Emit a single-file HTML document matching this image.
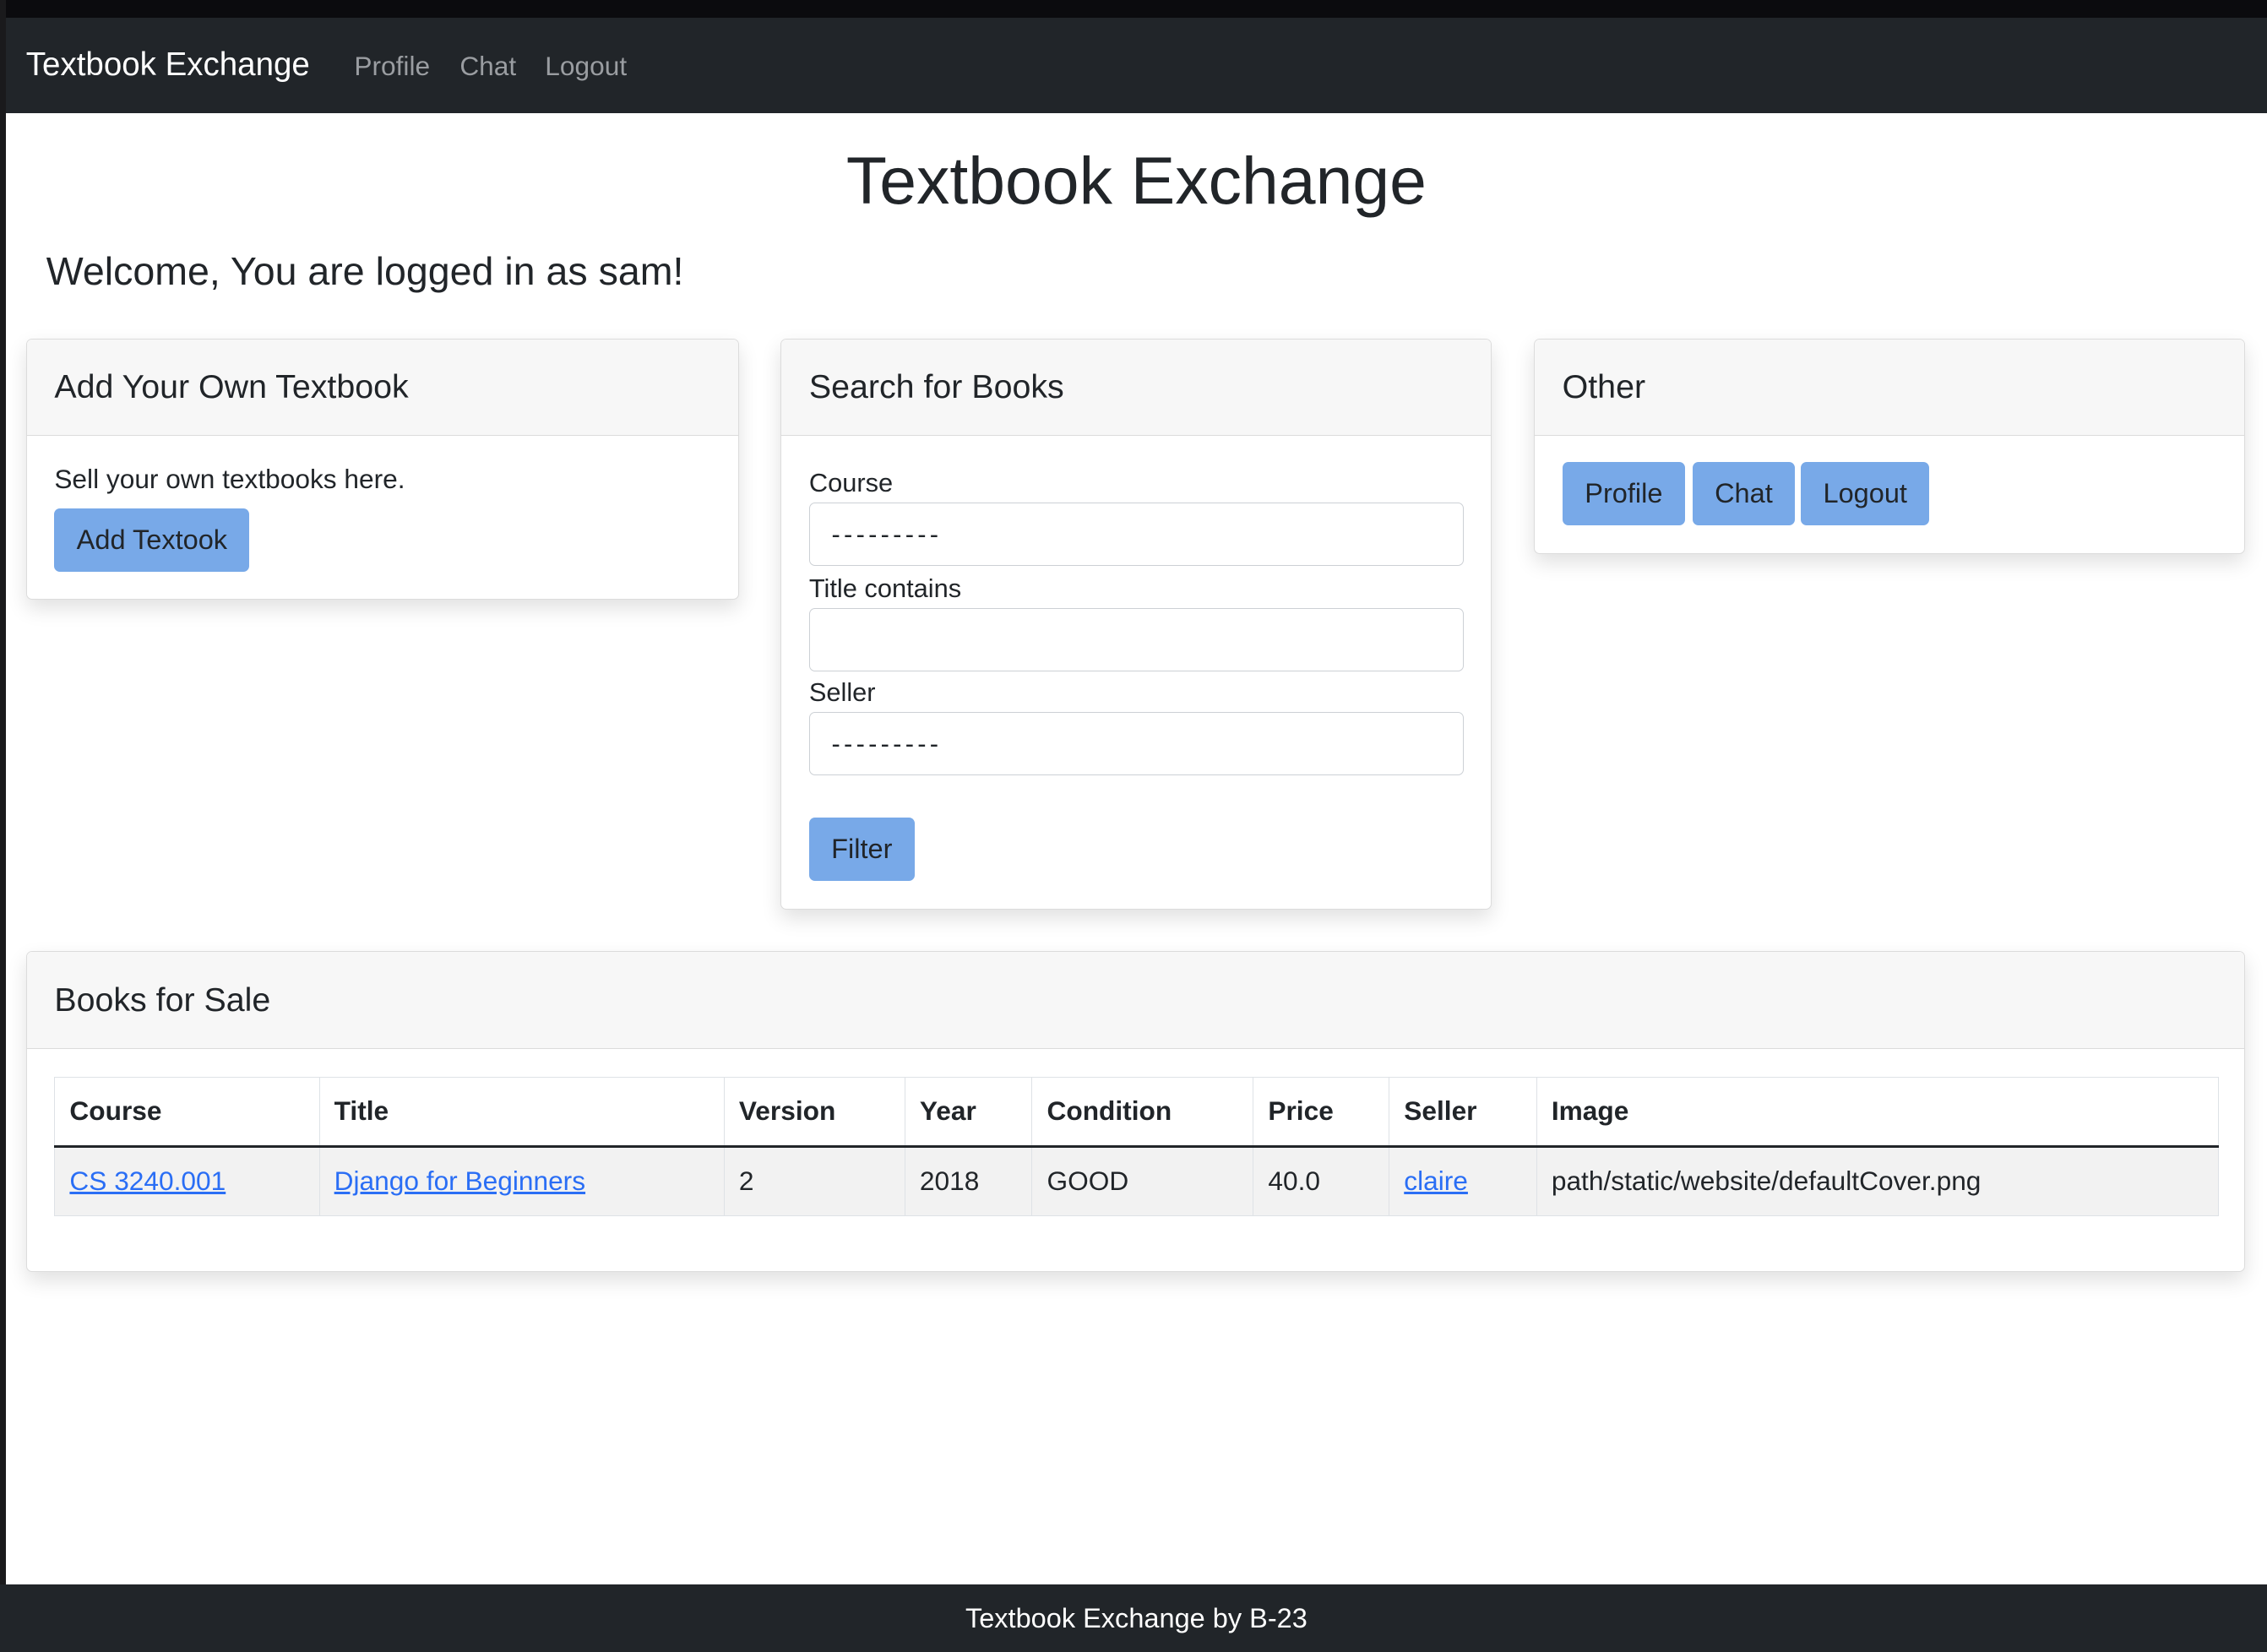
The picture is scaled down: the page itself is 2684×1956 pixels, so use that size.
<!DOCTYPE html>
<html><head><meta charset="utf-8"><style>
*{box-sizing:border-box;margin:0;padding:0}
html,body{width:2684px;height:1956px;overflow:hidden;background:#fff}
#w{zoom:1.7117;position:relative;width:1568px;height:1143px;font-family:"Liberation Sans",sans-serif;color:#212529}
.a{position:absolute;white-space:nowrap}
.card{position:absolute;border:1px solid #dcdcdc;border-radius:4px;background:#fff;box-shadow:0 6px 14px rgba(0,0,0,.12);overflow:hidden}
.ch{height:67px;background:#f7f7f7;border-bottom:1px solid #dcdcdc;font-size:23px;padding:20px 0 0 19px}
.btn{position:absolute;background:#78a9e8;border-radius:4px;font-size:19px;color:#212529;text-align:center}
.inp{position:absolute;left:19px;width:453px;height:44px;border:1px solid #ccd0d5;border-radius:4px;font-size:18px;padding:11px 0 0 15px}
.d{letter-spacing:2.5px}
.lbl{position:absolute;left:19px;font-size:18px}
table{position:absolute;left:19px;top:86px;border-collapse:collapse;width:1497px;font-size:18.5px}
th,td{border:1px solid #dee2e6;text-align:left;padding:0 10px}
th{height:48px;border-bottom:2px solid #212529}
td{height:48px;background:#f2f2f2}
a{color:#2a6ef5;text-decoration:underline}
</style></head><body><div id="w">
<div class="a" style="left:0;top:0;width:1568px;height:12px;background:#0b0b0e"></div>
<div class="a" style="left:0;top:12px;width:1568px;height:66px;background:#212529"></div>
<div class="a" style="left:0;top:0;width:4px;height:1143px;background:#1a1a1c"></div>
<div class="a" style="left:18px;top:32px;font-size:22.5px;color:#fff">Textbook Exchange</div>
<div class="a" style="left:245px;top:35px;font-size:18.5px;color:#9a9da1">Profile</div>
<div class="a" style="left:318px;top:35px;font-size:18.5px;color:#9a9da1">Chat</div>
<div class="a" style="left:377px;top:35px;font-size:18.5px;color:#9a9da1">Logout</div>
<div class="a" style="left:0;width:1572px;text-align:center;top:99px;font-size:46px">Textbook Exchange</div>
<div class="a" style="left:32px;top:172px;font-size:27.2px">Welcome, You are logged in as sam!</div>

<div class="card" style="left:18px;top:234px;width:493px;height:181px">
<div class="ch">Add Your Own Textbook</div>
<div class="a" style="left:19px;top:86px;font-size:18.5px">Sell your own textbooks here.</div>
<div class="btn" style="left:19px;top:117px;width:135px;height:44px;padding-top:11px">Add Textook</div>
</div>

<div class="card" style="left:540px;top:234px;width:492px;height:395px">
<div class="ch">Search for Books</div>
<div class="lbl" style="top:89px">Course</div>
<div class="inp d" style="top:113px">---------</div>
<div class="lbl" style="top:162px">Title contains</div>
<div class="inp" style="top:186px"></div>
<div class="lbl" style="top:234px">Seller</div>
<div class="inp d" style="top:258px">---------</div>
<div class="btn" style="left:19px;top:331px;width:73px;height:44px;padding-top:11px">Filter</div>
</div>

<div class="card" style="left:1061px;top:234px;width:492px;height:149px">
<div class="ch">Other</div>
<div class="btn" style="left:19px;top:85px;width:85px;height:44px;padding-top:11px">Profile</div>
<div class="btn" style="left:109px;top:85px;width:71px;height:44px;padding-top:11px">Chat</div>
<div class="btn" style="left:184px;top:85px;width:89px;height:44px;padding-top:11px">Logout</div>
</div>

<div class="card" style="left:18px;top:658px;width:1535px;height:222px">
<div class="ch">Books for Sale</div>
<table>
<tr><th style="width:183px">Course</th><th style="width:280px">Title</th><th style="width:125px">Version</th><th style="width:88px">Year</th><th style="width:153px">Condition</th><th style="width:94px">Price</th><th style="width:102px">Seller</th><th>Image</th></tr>
<tr><td><a>CS 3240.001</a></td><td><a>Django for Beginners</a></td><td>2</td><td>2018</td><td>GOOD</td><td>40.0</td><td><a>claire</a></td><td>path/static/website/defaultCover.png</td></tr>
</table>
</div>

<div class="a" style="left:0;top:1096px;width:1568px;height:47px;background:#212529"></div>
<div class="a" style="left:0;width:1572px;text-align:center;top:1109px;font-size:19px;color:#fff">Textbook Exchange by B-23</div>
</div></body></html>
